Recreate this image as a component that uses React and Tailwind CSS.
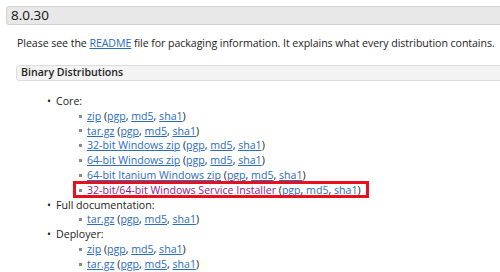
import React from "react";

const Link = ({ children, visited }) => (
  <a
    href="#"
    className={
      visited
        ? "text-[#8a1a8a] underline underline-offset-[1px]"
        : "text-[#2a6cc0] underline underline-offset-[1px]"
    }
  >
    {children}
  </a>
);

const Sigs = () => (
  <>
    {" "}(<Link>pgp</Link>, <Link>md5</Link>, <Link>sha1</Link>)
  </>
);

const Item = ({ children, boxed }) => (
  <div className="relative flex items-center h-[14.8px] whitespace-nowrap">
    <span className="ml-[79px] mr-[5px] w-[3px] h-[3px] bg-[#8a8a8a]" />
    <span>{children}</span>
    {boxed && (
      <div className="absolute left-[73px] top-[-2px] w-[296px] h-[17px] border-[3px] border-[#e8101c]" />
    )}
  </div>
);

const Group = ({ title }) => (
  <div className="flex items-center h-[14.8px] whitespace-nowrap">
    <span className="w-[9px] ml-[47px] leading-none">•</span>
    <span>{title}</span>
  </div>
);

export default function App() {
  return (
    <div
      className="w-[500px] h-[272px] overflow-hidden bg-white text-[#222] text-[10.6px]"
      style={{ fontFamily: '"Open Sans", "Noto Sans", sans-serif' }}
    >
      <div className="ml-[6px] mt-[6px] mr-[-10px] h-[19px] flex items-center pl-[4px] bg-[#e8e8e8] border border-[#d2d2d2] rounded-[3px] text-[13.5px] text-[#111]">
        8.0.30
      </div>
      <p className="ml-[17px] mt-[11px] leading-[14px] whitespace-nowrap tracking-[-0.06px]">
        Please see the <Link>README</Link> file for packaging information. It explains what every distribution contains.
      </p>
      <div className="ml-[16px] mt-[15px] mr-[-10px] h-[16px] flex items-center pl-[4px] bg-[#f3f3f3] border border-[#dcdcdc] rounded-[3px] font-semibold">
        Binary Distributions
      </div>
      <div className="mt-[13px] leading-[14.8px]">
        <Group title="Core:" />
        <Item><Link>zip</Link><Sigs /></Item>
        <Item><Link>tar.gz</Link><Sigs /></Item>
        <Item><Link>32-bit Windows zip</Link><Sigs /></Item>
        <Item><Link>64-bit Windows zip</Link><Sigs /></Item>
        <Item><Link>64-bit Itanium Windows zip</Link><Sigs /></Item>
        <Item boxed><Link visited>32-bit/64-bit Windows Service Installer</Link><Sigs /></Item>
        <Group title="Full documentation:" />
        <Item><Link>tar.gz</Link><Sigs /></Item>
        <Group title="Deployer:" />
        <Item><Link>zip</Link><Sigs /></Item>
        <Item><Link>tar.gz</Link><Sigs /></Item>
      </div>
    </div>
  );
}
